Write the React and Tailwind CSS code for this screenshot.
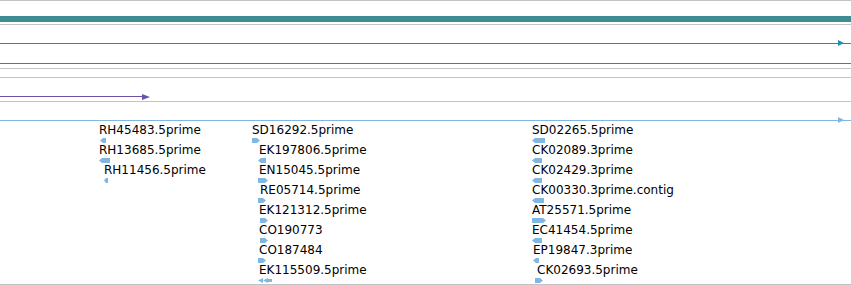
import React from "react";

const LINE_GRAY = "bg-[#c3c3c3]";

const features = [
  // left column
  { label: "RH45483.5prime", lx: 99, row: 0, gx: 100, gw: 6, dir: "L" },
  { label: "RH13685.5prime", lx: 99, row: 1, gx: 99, gw: 11, dir: "L" },
  { label: "RH11456.5prime", lx: 104, row: 2, gx: 104, gw: 4, dir: "L" },
  // middle column
  { label: "SD16292.5prime", lx: 252, row: 0, gx: 252, gw: 8, dir: "R" },
  { label: "EK197806.5prime", lx: 259, row: 1, gx: 258, gw: 8, dir: "L" },
  { label: "EN15045.5prime", lx: 259, row: 2, gx: 258, gw: 10, dir: "R" },
  { label: "RE05714.5prime", lx: 260, row: 3, gx: 258, gw: 8, dir: "R" },
  { label: "EK121312.5prime", lx: 259, row: 4, gx: 260, gw: 8, dir: "R" },
  { label: "CO190773", lx: 259, row: 5, gx: 260, gw: 8, dir: "R" },
  { label: "CO187484", lx: 259, row: 6, gx: 258, gw: 8, dir: "R" },
  { label: "EK115509.5prime", lx: 259, row: 7, gx: 258, gw: 14, dir: "LL" },
  // right column
  { label: "SD02265.5prime", lx: 532, row: 0, gx: 532, gw: 13, dir: "L" },
  { label: "CK02089.3prime", lx: 532, row: 1, gx: 532, gw: 10, dir: "L" },
  { label: "CK02429.3prime", lx: 532, row: 2, gx: 532, gw: 10, dir: "L" },
  { label: "CK00330.3prime.contig", lx: 532, row: 3, gx: 532, gw: 12, dir: "L" },
  { label: "AT25571.5prime", lx: 532, row: 4, gx: 532, gw: 14, dir: "R" },
  { label: "EC41454.5prime", lx: 532, row: 5, gx: 532, gw: 10, dir: "L" },
  { label: "EP19847.3prime", lx: 533, row: 6, gx: 533, gw: 6, dir: "L" },
  { label: "CK02693.5prime", lx: 537, row: 7, gx: 535, gw: 8, dir: "R" },
];

function Glyph({ w, dir }) {
  const h = 5;
  const a = Math.min(3, w / 2);
  let shape;
  if (dir === "L") {
    shape = <polygon points={`0,${h / 2} ${a},0 ${w},0 ${w},${h} ${a},${h}`} />;
  } else if (dir === "R") {
    shape = <polygon points={`0,0 ${w - a},0 ${w},${h / 2} ${w - a},${h} 0,${h}`} />;
  } else {
    shape = (
      <>
        <polygon points={`0,2.5 5,0 5,5`} />
        <polygon points={`5,2.5 10,0 10,5`} />
        <rect x="10" y="1" width={w - 10} height="3" />
      </>
    );
  }
  return (
    <svg width={w} height={h} viewBox={`0 0 ${w} ${h}`} className="block fill-[#80b6e0]">
      {shape}
    </svg>
  );
}

function RightArrowLine({ color, fill }) {
  return (
    <div className="relative h-px">
      <div className={`h-px w-full ${color}`} />
      <svg width="6" height="6" viewBox="0 0 6 6" className={`absolute left-[838px] top-[-3px] ${fill}`}>
        <polygon points="0,0 6,3 0,6" />
      </svg>
    </div>
  );
}

export default function App() {
  return (
    <div className="w-[851px] h-[285px] bg-white overflow-hidden flex flex-col font-['DejaVu_Sans',sans-serif] text-[12px] text-black">
      <div className={`h-px ${LINE_GRAY}`} />
      <div className="h-[15px]" />
      <div className="h-[6px] bg-[#3f8d90]" />
      <div className="h-[2px]" />
      <div className={`h-px ${LINE_GRAY}`} />
      <div className="h-[18px]" />
      <RightArrowLine color="bg-[#1b8fae]" fill="fill-[#1b8fae]" />
      <div className="h-[19px]" />
      <div className="h-px bg-[#1b8fae]" />
      <div className="h-[4px]" />
      <div className={`h-px ${LINE_GRAY}`} />
      <div className="h-[8px]" />
      <div className={`h-px ${LINE_GRAY}`} />
      <div className="h-[18px]" />
      <div className="relative h-px">
        <div className="h-px w-[143px] bg-[#6a52a8]" />
        <svg width="8" height="6" viewBox="0 0 8 6" className="absolute left-[142px] top-[-2.5px] fill-[#6a52a8]">
          <polygon points="0,0 8,3 0,6" />
        </svg>
      </div>
      <div className="h-[4px]" />
      <div className={`h-px ${LINE_GRAY}`} />
      <div className="h-[18px]" />
      <RightArrowLine color="bg-[#80b6e0]" fill="fill-[#80b6e0]" />
      <div className="relative h-[163px]">
        {features.map((f) => (
          <React.Fragment key={f.label}>
            <div
              className="absolute leading-[14px] whitespace-nowrap"
              style={{ left: f.lx, top: 2 + 20 * f.row }}
            >
              {f.label}
            </div>
            <div className="absolute" style={{ left: f.gx, top: 17 + 20 * f.row }}>
              <Glyph w={f.gw} dir={f.dir} />
            </div>
          </React.Fragment>
        ))}
      </div>
      <div className={`h-px ${LINE_GRAY}`} />
    </div>
  );
}
